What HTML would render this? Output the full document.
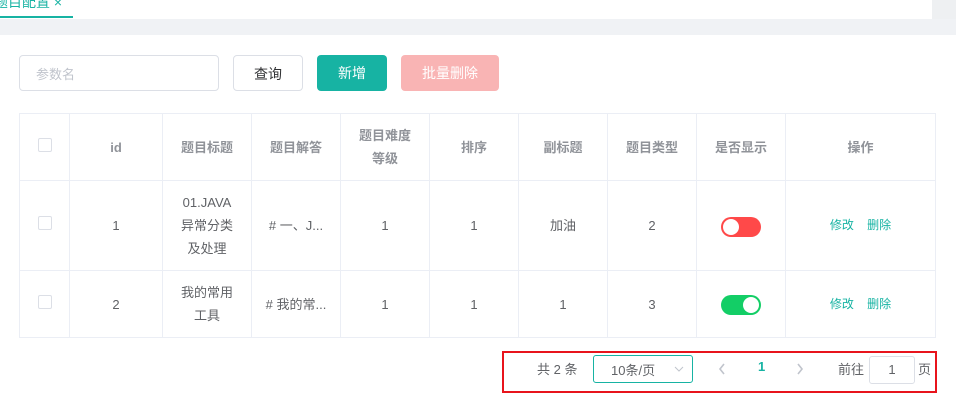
<!DOCTYPE html>
<html><head><meta charset="utf-8"><style>
*{box-sizing:border-box;margin:0;padding:0}
body{width:956px;height:409px;overflow:hidden;background:#fff;font-family:"Liberation Sans","Noto Sans CJK SC",sans-serif;position:relative;color:#606266}
.tabbar{position:absolute;left:0;top:0;width:956px;height:19px;background:#fff;box-shadow:0 2px 4px rgba(0,0,0,.12)}
.tab{position:absolute;left:-6px;top:-8px;font-size:14px;color:#17b3a3}
.tabline{position:absolute;left:0;top:16px;width:73px;height:2px;background:#17b3a3}
.gray{position:absolute;left:0;top:19px;width:956px;height:16px;background:#f0f2f5}
.rt{position:absolute;left:932px;top:0;width:24px;height:19px;background:#eef0f2}
.inp{position:absolute;left:19px;top:55px;width:200px;height:36px;border:1px solid #dcdfe6;border-radius:4px;font-size:13px;color:#c0c4cc;padding:8px 16px}
.btn{position:absolute;top:55px;height:36px;border-radius:4px;font-size:14px;text-align:center;line-height:36px}
table{position:absolute;left:19px;top:113px;border-collapse:collapse;font-size:13px}
td,th{border:1px solid #ebeef5;text-align:center;vertical-align:middle;line-height:23px}
th{color:#909399;font-weight:bold;height:67px}
.cb{display:inline-block;width:14px;height:14px;border:1px solid #dcdfe6;border-radius:2px;background:#fff}
.sw{display:inline-block;width:40px;height:20px;border-radius:10px;position:relative;vertical-align:middle}
.sw i{position:absolute;top:2px;width:16px;height:16px;border-radius:50%;background:#fff}
.op{color:#17b3a3;font-size:12px}
.pg{position:absolute;left:502px;top:351px;width:435px;height:42px;border:2px solid #e8141c;font-size:13px}
</style></head><body>
<div class="tabbar"><span class="tab">题目配置 ×</span><div class="tabline"></div></div>
<div class="rt"></div>
<div class="gray"></div>
<div class="inp">参数名</div>
<div class="btn" style="left:233px;width:70px;border:1px solid #dcdfe6;color:#303133">查询</div>
<div class="btn" style="left:317px;width:70px;background:#17b3a3;color:#fff">新增</div>
<div class="btn" style="left:401px;width:98px;background:#f9b4b4;color:#fff">批量删除</div>
<table>
<tr><th style="width:50px"><span class="cb"></span></th><th style="width:93px">id</th><th style="width:89px">题目标题</th><th style="width:89px">题目解答</th><th style="width:89px">题目难度<br>等级</th><th style="width:89px">排序</th><th style="width:89px">副标题</th><th style="width:89px">题目类型</th><th style="width:89px">是否显示</th><th style="width:150px">操作</th></tr>
<tr style="height:90px"><td><span class="cb"></span></td><td>1</td><td>01.JAVA<br>异常分类<br>及处理</td><td># 一、J...</td><td>1</td><td>1</td><td>加油</td><td>2</td><td><span class="sw" style="background:#ff4949"><i style="left:2px"></i></span></td><td class="op">修改&nbsp;&nbsp;&nbsp;&nbsp;删除</td></tr>
<tr style="height:67px"><td><span class="cb"></span></td><td>2</td><td>我的常用<br>工具</td><td># 我的常...</td><td>1</td><td>1</td><td>1</td><td>3</td><td><span class="sw" style="background:#13ce66"><i style="right:2px"></i></span></td><td class="op">修改&nbsp;&nbsp;&nbsp;&nbsp;删除</td></tr>
</table>
<div class="pg">
<span style="position:absolute;left:33px;top:6px">共 2 条</span>
<div style="position:absolute;left:89px;top:2px;width:100px;height:28px;border:1px solid #17b3a3;border-radius:3px;padding:4px 0 0 17px">10条/页
<svg style="position:absolute;right:8px;top:10px" width="10" height="6" viewBox="0 0 10 6"><path d="M1 1l4 4 4-4" fill="none" stroke="#c0c4cc" stroke-width="1"/></svg></div>
<svg style="position:absolute;left:214px;top:10px" width="8" height="12" viewBox="0 0 8 12"><path d="M6 1L2 6l4 5" fill="none" stroke="#c0c4cc" stroke-width="1.6"/></svg>
<span style="position:absolute;left:254px;top:6px;color:#17b3a3;font-weight:bold">1</span>
<svg style="position:absolute;left:292px;top:10px" width="8" height="12" viewBox="0 0 8 12"><path d="M2 1l4 5-4 5" fill="none" stroke="#c0c4cc" stroke-width="1.6"/></svg>
<span style="position:absolute;left:334px;top:6px">前往</span>
<div style="position:absolute;left:365px;top:3px;width:46px;height:28px;border:1px solid #dcdfe6;border-radius:3px;text-align:center;line-height:26px">1</div>
<span style="position:absolute;left:414px;top:6px">页</span>
</div>
</body></html>
